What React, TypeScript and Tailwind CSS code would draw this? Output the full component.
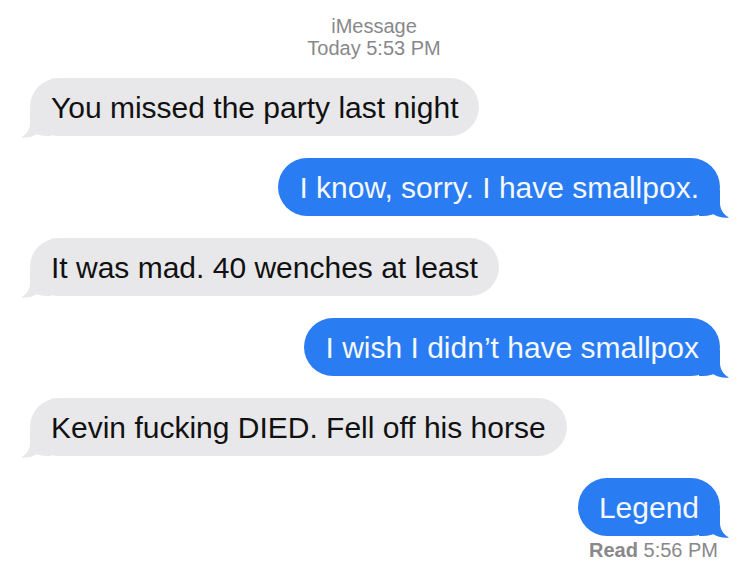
import React from 'react';

type Msg = { text: string; sent: boolean };

const messages: Msg[] = [
  { text: 'You missed the party last night', sent: false },
  { text: 'I know, sorry. I have smallpox.', sent: true },
  { text: 'It was mad. 40 wenches at least', sent: false },
  { text: 'I wish I didn’t have smallpox', sent: true },
  { text: 'Kevin fucking DIED. Fell off his horse', sent: false },
  { text: 'Legend', sent: true },
];

const Tail = ({ sent }: { sent: boolean }) => (
  <svg
    width="30"
    height="28"
    viewBox="0 0 30 28"
    className={
      sent
        ? 'absolute right-[-9px] bottom-[-2px] -scale-x-100'
        : 'absolute left-[-9px] bottom-[-2px]'
    }
  >
    <path
      d="M9 0 L9 13 C9 19.5 5.5 24.5 0 27.5 C6 28.2 11.5 26.8 15.5 24.2 C19 25.6 24 26 30 26 L30 0 Z"
      fill={sent ? '#2a7cf2' : '#e8e8ea'}
    />
  </svg>
);

const Bubble = ({ msg }: { msg: Msg }) => (
  <div
    className={`relative rounded-[29px] px-[21px] pt-[12px] pb-[10px] text-[30px] leading-[36px] whitespace-nowrap ${
      msg.sent ? 'self-end bg-[#2a7cf2] text-[#f4f8ff]' : 'self-start bg-[#e8e8ea] text-[#111111]'
    }`}
  >
    <Tail sent={msg.sent} />
    <span className="relative">{msg.text}</span>
  </div>
);

export default function App() {
  return (
    <div className="w-[748px] h-[574px] bg-white overflow-hidden font-['Liberation_Sans',Arial,sans-serif]">
      <div className="pt-[15px] text-center text-[20px] leading-[22px] text-[#88888c]">
        <div>iMessage</div>
        <div>Today 5:53 PM</div>
      </div>

      <div className="mt-[19px] flex flex-col gap-[22px] pl-[30px] pr-[28px]">
        {messages.map((m, i) => (
          <Bubble key={i} msg={m} />
        ))}
      </div>

      <div className="mt-[3px] pr-[30px] text-right text-[20px] leading-[22px] text-[#88888c]">
        <span className="font-bold">Read</span> 5:56 PM
      </div>
    </div>
  );
}
